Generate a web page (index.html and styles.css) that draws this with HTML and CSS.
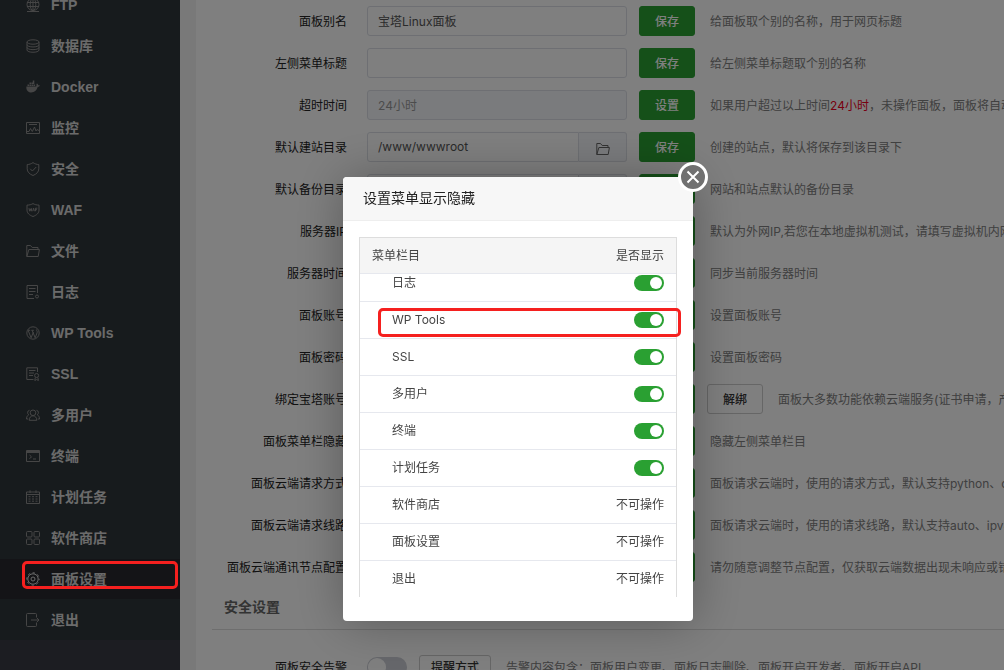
FILE: index.html
```html
<!DOCTYPE html>
<html lang="zh-CN">
<head>
  <meta charset="utf-8">
  <title>面板设置</title>
  <link rel="stylesheet" href="styles.css">
</head>
<body>
  <div class="layout">
    <nav class="sidebar">
      <ul class="menu">
        <li><a href="#"><svg viewBox="0 0 14 14"><circle cx="7" cy="6.5" r="6"/><ellipse cx="7" cy="6.5" rx="2.8" ry="6"/><path d="M1 4.5h12M1 8.5h12M7 .5v12M1 13.5h12"/></svg>FTP</a></li>
        <li><a href="#"><svg viewBox="0 0 14 14"><ellipse cx="7" cy="3" rx="6" ry="2.2"/><path d="M1 3v8c0 3 12 3 12 0V3M1 5.700c0 3 12 3 12 0M1 8.400c0 3 12 3 12 0"/></svg>数据库</a></li>
        <li><a href="#"><svg class="solid" viewBox="0 0 14 14"><path d="M.4 6.500h9.700c.6-.6.6-1.700.2-2.400l.8-.7c.7.5 1 1.100 1.100 1.900.6-.1 1.200 0 1.700.3-.4.900-1.100 1.400-2.200 1.400-1 3.400-3.100 5.500-6.500 5.500C2 12.500 0 10 .4 6.500zM1.500 4.400h1.600V6H1.500zM3.500 4.400h1.600V6H3.500zM5.500 4.400h1.600V6H5.500zM7.500 4.400h1.600V6H7.500zM3.500 2.500h1.600v1.500H3.500zM5.500 2.500h1.600v1.500H5.500zM6.800.5h1.500V4H6.800z"/></svg>Docker</a></li>
        <li><a href="#"><svg viewBox="0 0 14 14"><path d="M.5 1.500h13v11H.5zM3 3.500h8M1 10.500h2l1.500-3 1.800 3L8.500 6l1.500 4 1-1.500 2 1"/></svg>监控</a></li>
        <li><a href="#"><svg viewBox="0 0 14 14"><path d="M7 .6c1.700 1.200 3.700 1.900 5.800 2v4.200c0 3-2.200 5.300-5.800 6.700C3.400 12.100 1.200 9.800 1.200 6.800V2.600C3.300 2.500 5.300 1.800 7 .6zM4.200 6.800L6.400 9l3.800-4"/></svg>安全</a></li>
        <li><a href="#"><svg viewBox="0 0 14 14"><path d="M7 .6c1.700 1 3.700 1.500 6 1.500v5c0 3-2.400 5.100-6 6.400C3.400 12.200 1 10.100 1 7.100v-5c2.300 0 4.300-.5 6-1.500zM3 5.200l.6 3 .8-2.400.8 2.400.5-3M6.700 8.200L7.600 5.200l.8 3M9.500 8.200v-3h1.800M9.500 6.700h1.500"/></svg>WAF</a></li>
        <li><a href="#"><svg viewBox="0 0 14 14"><path d="M.8 12.500V1.500h3.700l1.700 2h5.800v1.800M.8 12.500L2.900 5.500h10.500l-1.200 7z"/></svg>文件</a></li>
        <li><a href="#"><svg viewBox="0 0 14 14"><path d="M11.500 8V.5H1v13h7M3 3.500h6.500M3 6.500h6.500M3 9.500h4"/><circle cx="11" cy="11.500" r="1.500"/></svg>日志</a></li>
        <li><a href="#"><svg viewBox="0 0 14 14"><circle cx="7" cy="7" r="6.200"/><path d="M2.200 4.500l2.900 7.300L7.400 6M6.200 4.500l3 7.300 1.900-5c.5-1.500-.6-2.300-.7-3.300M1.800 4.300h2.400M5.400 4.300h2.400"/></svg>WP Tools</a></li>
        <li><a href="#"><svg viewBox="0 0 14 14"><path d="M11.500 5V.8H.8v11.700h6.700M3 3.500h6.500M3 6h5M3 8.500h4M9.300 10.500l-.5 3 1.800-1 1.800 1-.5-3"/><circle cx="10.600" cy="8.500" r="2"/></svg>SSL</a></li>
        <li><a href="#"><svg viewBox="0 0 14 14"><circle cx="7" cy="4.800" r="2.800"/><path d="M3.200 12.300c0-6 7.600-6 7.600 0zM3.500 2.300C1.300 2.500 1 5.700 2.700 6.800.9 7.800.5 9.500.5 11h1.700M10.500 2.300c2.200.2 2.500 3.400.8 4.500 1.800 1 2.200 2.700 2.200 4.200h-1.700"/></svg>多用户</a></li>
        <li><a href="#"><svg viewBox="0 0 14 14"><path d="M.5 1.500h13v11H.5zM.5 2.500h13M.5 3.500h13M3.500 6l2 1.800-2 2M7 10h3"/></svg>终端</a></li>
        <li><a href="#"><svg viewBox="0 0 14 14"><path d="M.5 2h13v11.500H.5zM.5 4.500h13M4 .3V3M10 .3V3M2.500 6.700h2M6 6.700h2M9.500 6.700h2M2.500 9h2M6 9h2M9.500 9h2M2.500 11.200h2M6 11.200h2M9.500 11.200h2"/></svg>计划任务</a></li>
        <li><a href="#"><svg viewBox="0 0 14 14"><rect x=".5" y=".5" width="5.500" height="5.500" rx="1"/><rect x="8" y=".5" width="5.500" height="5.500" rx="1"/><rect x=".5" y="8" width="5.500" height="5.500" rx="1"/><rect x="8" y="8" width="5.500" height="5.500" rx="1"/></svg>软件商店</a></li>
        <li class="active"><a href="#"><svg viewBox="0 0 14 14"><circle cx="7" cy="7" r="5.200"/><circle cx="7" cy="7" r="6.200" stroke-dasharray="2.435" stroke-dashoffset="1.217"/><circle cx="7" cy="7" r="2"/></svg>面板设置</a></li>
        <li><a href="#"><svg viewBox="0 0 14 14"><path d="M10.500 4V1.500q0-1-1-1h-8q-1 0-1 1v11q0 1 1 1h8q1 0 1-1V10M5 7h8M10.500 4.500L13 7l-2.500 2.500"/></svg>退出</a></li>
      </ul>
    </nav>

    <main class="panel">
      <form class="settings">
        <div class="row">
          <label for="alias">面板别名</label>
          <input class="text" id="alias" type="text" value="宝塔Linux面板">
          <button class="btn primary" type="button">保存</button>
          <span class="hint">给面板取个别的名称，用于网页标题</span>
        </div>
        <div class="row">
          <label for="menu-title">左侧菜单标题</label>
          <input class="text" id="menu-title" type="text">
          <button class="btn primary" type="button">保存</button>
          <span class="hint">给左侧菜单标题取个别的名称</span>
        </div>
        <div class="row">
          <label for="timeout">超时时间</label>
          <input class="text" id="timeout" type="text" value="24小时" disabled>
          <button class="btn primary" type="button">设置</button>
          <span class="hint">如果用户超过以上时间<em>24小时</em>，未操作面板，面板将自动退出登录</span>
        </div>
        <div class="row">
          <label for="site-dir">默认建站目录</label>
          <div class="group">
            <input class="text" id="site-dir" type="text" value="/www/wwwroot">
            <button class="addon" type="button" aria-label="选择目录"><svg viewBox="0 0 14 14"><path d="M.8 12.500V1.500h3.700l1.700 2h5.800v1.800M.8 12.500L2.900 5.500h10.500l-1.200 7z"/></svg></button>
          </div>
          <button class="btn primary" type="button">保存</button>
          <span class="hint">创建的站点，默认将保存到该目录下</span>
        </div>
        <div class="row">
          <label for="backup-dir">默认备份目录</label>
          <div class="group">
            <input class="text" id="backup-dir" type="text">
            <button class="addon" type="button" aria-label="选择目录"></button>
          </div>
          <button class="btn primary" type="button">保存</button>
          <span class="hint">网站和站点默认的备份目录</span>
        </div>
        <div class="row">
          <label for="server-ip">服务器IP</label>
          <input class="text" id="server-ip" type="text">
          <button class="btn primary" type="button">保存</button>
          <span class="hint">默认为外网IP,若您在本地虚拟机测试，请填写虚拟机内网IP</span>
        </div>
        <div class="row">
          <label for="server-time">服务器时间</label>
          <input class="text" id="server-time" type="text" disabled>
          <button class="btn primary" type="button">同步</button>
          <span class="hint">同步当前服务器时间</span>
        </div>
        <div class="row">
          <label for="account">面板账号</label>
          <input class="text" id="account" type="text" disabled>
          <button class="btn primary" type="button">设置</button>
          <span class="hint">设置面板账号</span>
        </div>
        <div class="row">
          <label for="password">面板密码</label>
          <input class="text" id="password" type="text" disabled>
          <button class="btn primary" type="button">设置</button>
          <span class="hint">设置面板密码</span>
        </div>
        <div class="row">
          <label for="bind">绑定宝塔账号</label>
          <input class="text" id="bind" type="text" disabled>
          <button class="btn primary" type="button">更换</button>
          <button class="btn" type="button">解绑</button>
          <span class="hint">面板大多数功能依赖云端服务(证书申请，产品购买等)</span>
        </div>
        <div class="row">
          <label for="menu-hide">面板菜单栏隐藏</label>
          <input class="text" id="menu-hide" type="text" disabled>
          <button class="btn primary" type="button">设置</button>
          <span class="hint">隐藏左侧菜单栏目</span>
        </div>
        <div class="row">
          <label for="cloud-mode">面板云端请求方式</label>
          <input class="text" id="cloud-mode" type="text" disabled>
          <button class="btn primary" type="button">设置</button>
          <span class="hint">面板请求云端时，使用的请求方式，默认支持python、curl、php</span>
        </div>
        <div class="row">
          <label for="cloud-line">面板云端请求线路</label>
          <input class="text" id="cloud-line" type="text" disabled>
          <button class="btn primary" type="button">设置</button>
          <span class="hint">面板请求云端时，使用的请求线路，默认支持auto、ipv4、ipv6</span>
        </div>
        <div class="row">
          <label for="cloud-node">面板云端通讯节点配置</label>
          <input class="text" id="cloud-node" type="text" disabled>
          <button class="btn primary" type="button">设置</button>
          <span class="hint">请勿随意调整节点配置，仅获取云端数据出现未响应或错误时使用</span>
        </div>

        <h2>安全设置</h2>

        <div class="row">
          <label for="alarm">面板安全告警</label>
          <input class="switch large" id="alarm" type="checkbox">
          <button class="btn small" type="button">提醒方式</button>
          <span class="hint">告警内容包含：面板用户变更、面板日志删除、面板开启开发者、面板开启API</span>
        </div>
      </form>
    </main>
  </div>

  <div class="shade"></div>
  <div class="mark menu-mark"></div>

  <section class="dialog" role="dialog" aria-labelledby="dialog-title">
    <h1 id="dialog-title">设置菜单显示隐藏</h1>
    <button class="close" type="button" aria-label="关闭"><svg viewBox="0 0 14 14"><path d="M1.500 1.500l11 11M12.500 1.500l-11 11"/></svg></button>
    <div class="table-box">
      <table class="table-head">
        <thead>
          <tr><th>菜单栏目</th><th>是否显示</th></tr>
        </thead>
      </table>
      <div class="table-scroll">
        <table class="table-body">
          <tbody>
            <tr><td><label for="s-log">日志</label></td><td><input class="switch" id="s-log" type="checkbox" checked></td></tr>
            <tr><td><label for="s-wp">WP Tools</label></td><td><input class="switch" id="s-wp" type="checkbox" checked></td></tr>
            <tr><td><label for="s-ssl">SSL</label></td><td><input class="switch" id="s-ssl" type="checkbox" checked></td></tr>
            <tr><td><label for="s-users">多用户</label></td><td><input class="switch" id="s-users" type="checkbox" checked></td></tr>
            <tr><td><label for="s-term">终端</label></td><td><input class="switch" id="s-term" type="checkbox" checked></td></tr>
            <tr><td><label for="s-cron">计划任务</label></td><td><input class="switch" id="s-cron" type="checkbox" checked></td></tr>
            <tr><td>软件商店</td><td>不可操作</td></tr>
            <tr><td>面板设置</td><td>不可操作</td></tr>
            <tr><td>退出</td><td>不可操作</td></tr>
          </tbody>
        </table>
      </div>
    </div>
    <div class="mark row-mark"></div>
  </section>
</body>
</html>
```

FILE: styles.css
```css
* {
  box-sizing: border-box;
}
body {
  margin: 0;
  height: 100vh;
  overflow: hidden;
  background: #f3f3f3;
  color: #333;
  font: 12px/18px Inter, "Noto Sans CJK SC", sans-serif;
}
button, input {
  margin: 0;
  font: inherit;
  color: inherit;
}
svg {
  width: 14px;
  height: 14px;
  flex: none;
  fill: none;
  stroke: currentColor;
  stroke-width: 1;
}
svg.solid {
  fill: currentColor;
  stroke: none;
}
.layout {
  display: flex;
  height: 100%;
}

/* sidebar */
.sidebar {
  flex: none;
  width: 180px;
  overflow: hidden;
  background: #393b44;
}
.menu {
  display: flex;
  flex-direction: column;
  gap: 1px;
  margin: -15px 0 0;
  padding: 0;
  list-style: none;
  background: #2f363a;
}
.menu a {
  display: flex;
  align-items: center;
  gap: 11px;
  height: 40px;
  padding-left: 26px;
  color: #d6d6d6;
  font: bold 14px/20px "Liberation Sans", "Noto Sans CJK SC", sans-serif;
  text-decoration: none;
}
.menu svg {
  color: #8c8c8c;
}
.menu .active {
  background: #28282e;
}
.menu .active svg {
  color: #d6d6d6;
}

/* settings form */
.panel {
  flex: 1;
  min-width: 0;
  margin-left: 16px;
  padding: 6px 0 0 16px;
  overflow: hidden;
  background: #fff;
}
.settings {
  display: flex;
  flex-direction: column;
  gap: 12px;
}
.row {
  display: flex;
  align-items: center;
  gap: 12px;
  height: 30px;
  white-space: nowrap;
}
.row label {
  flex: none;
  width: 135px;
  margin-right: 8px;
  padding-top: 1px;
  color: #222;
  text-align: right;
}
.text {
  flex: none;
  width: 260px;
  height: 30px;
  padding: 0 10px 2px;
  border: 1px solid #dcdfe6;
  border-radius: 3px;
  background: #fff;
  color: #555;
}
.text:disabled {
  background: #f5f7fa;
  color: #999;
}
.group {
  display: flex;
  flex: none;
  width: 260px;
}
.group .text {
  flex: 1;
  min-width: 0;
  border-radius: 3px 0 0 3px;
}
.addon {
  display: flex;
  align-items: center;
  justify-content: center;
  width: 48px;
  height: 30px;
  padding: 4px 0 0;
  border: 1px solid #dcdfe6;
  border-left: 0;
  border-radius: 0 3px 3px 0;
  background: #f5f7fa;
  color: #666;
}
.btn {
  flex: none;
  width: 56px;
  height: 30px;
  padding: 1px 0 0;
  border: 1px solid #ccc;
  border-radius: 3px;
  background: #fff;
  font-weight: 500;
}
.btn.primary {
  border-color: #2aa032;
  background: #2aa032;
  color: #fff;
}
.btn.small {
  width: 72px;
  height: 24px;
}
.hint {
  margin-left: 3px;
  padding-top: 1px;
  color: #808080;
}
.hint em {
  color: #f00020;
  font-style: normal;
}
.settings h2 {
  margin: 0 0 10px;
  padding: 2px 12px 11px;
  border-bottom: 1px solid #ddd;
  color: #666;
  font-size: 14px;
  line-height: 22px;
}

.switch {
  display: block;
  flex: none;
  appearance: none;
  width: 30px;
  height: 16px;
  padding: 2px;
  border-radius: 10px;
  background: #ccced6;
}
.switch::before {
  content: "";
  display: block;
  width: 12px;
  height: 12px;
  border-radius: 50%;
  background: #fff;
}
.switch:checked {
  background: #2aa032;
}
.switch:checked::before {
  margin-left: auto;
}
.switch.large {
  width: 40px;
  height: 20px;
  padding: 1px;
}
.switch.large::before {
  width: 18px;
  height: 18px;
}

/* dialog */
.shade {
  position: fixed;
  inset: 0;
  background: rgba(0, 0, 0, .5);
}
.dialog {
  position: fixed;
  top: 177px;
  left: 343px;
  width: 350px;
  padding-bottom: 24px;
  border-radius: 4px;
  background: #fff;
  box-shadow: 1px 1px 50px rgba(0, 0, 0, .3);
}
.dialog h1 {
  margin: 0 0 16px;
  padding: 0 20px 2px;
  border-bottom: 1px solid #eee;
  border-radius: 4px 4px 0 0;
  background: #f7f7f7;
  color: #222;
  font-size: 14px;
  font-weight: normal;
  line-height: 41px;
}
.close {
  position: absolute;
  top: -15px;
  right: -15px;
  display: flex;
  align-items: center;
  justify-content: center;
  width: 30px;
  height: 30px;
  padding: 0;
  border: 3px solid #fff;
  border-radius: 50%;
  background: #707070;
  color: #fff;
}
.close svg {
  stroke-width: 2;
}
.table-box {
  margin: 0 16px;
  border: 1px solid #ddd;
  border-bottom: 0;
}
.table-box table {
  width: 100%;
  border-spacing: 0;
  color: #444;
}
.table-box th, .table-box td {
  height: 37px;
  padding: 0 12px;
  border-bottom: 1px solid #e6e8ee;
  font-weight: normal;
  text-align: left;
}
.table-box th {
  height: 36px;
  background: #f5f5f5;
}
.table-box td:first-child {
  padding-left: 32px;
}
.table-box th:last-child, .table-box td:last-child {
  text-align: right;
}
.table-box tbody tr:last-child td {
  height: 36px;
  border-bottom: 0;
}
.table-box .switch {
  margin-left: auto;
}
.table-scroll {
  display: flex;
  flex-direction: column;
  justify-content: flex-end;
  height: 323px;
  overflow: hidden;
}

.mark {
  position: fixed;
  border: 3px solid #f5201f;
  border-radius: 5px;
}
.menu-mark {
  top: 561px;
  left: 22px;
  width: 156px;
  height: 28px;
}
.row-mark {
  position: absolute;
  top: 131px;
  left: 35px;
  width: 303px;
  height: 29px;
}
```
